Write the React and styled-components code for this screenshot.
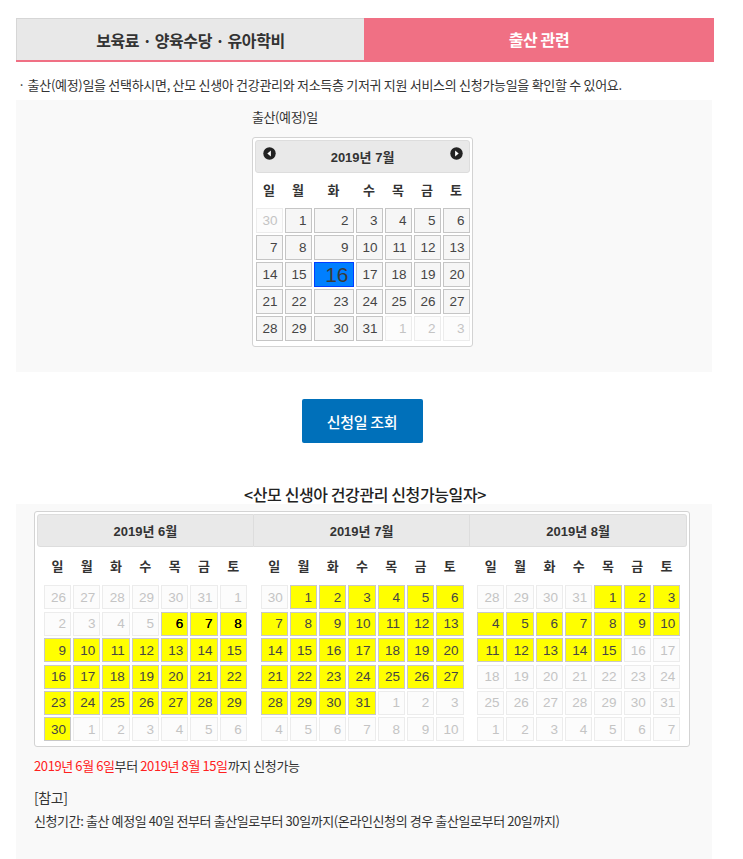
import React from 'react';
import styled, { createGlobalStyle, css } from 'styled-components';

const GlobalStyle = createGlobalStyle`
  body {
    margin: 0;
    background: #ffffff;
    font-family: "Noto Sans CJK KR", "Noto Sans", sans-serif;
    color: #333;
  }
`;

const Page = styled.div`
  width: 698px;
  margin-left: 16px;
  padding-top: 18px;
`;

const Tabs = styled.div`
  display: flex;
  height: 42px;
  border-bottom: 2px solid #f07084;
`;

const Tab = styled.div`
  flex: ${(p) => (p.$active ? '0 0 350px' : '0 0 348px')};
  display: flex;
  align-items: center;
  justify-content: center;
  font-size: 16px;
  font-weight: 700;
  letter-spacing: -0.4px;
  box-sizing: border-box;
  ${(p) =>
    p.$active
      ? css`
          background: #f07084;
          color: #fff;
        `
      : css`
          background: #e8e8e8;
          color: #333;
          border-top: 1px solid #d6d6d6;
          border-left: 1px solid #d6d6d6;
        `}
`;

const Notice = styled.p`
  margin: 14px 0 6px 2px;
  font-size: 13px;
  line-height: 18px;
  letter-spacing: -0.3px;
  color: #333;
`;

const Panel = styled.section`
  width: 696px;
  background: #f9f9f9;
  box-sizing: border-box;
  padding: ${(p) => p.$pad};
`;

const PickerColumn = styled.div`
  width: 221px;
  margin-left: 236px;
`;

const FieldLabel = styled.div`
  font-size: 13px;
  line-height: 18px;
  letter-spacing: -0.4px;
  color: #333;
  margin-bottom: 11px;
`;

const Widget = styled.div`
  background: #fff;
  border: 1px solid #d3d3d3;
  border-radius: 3px;
  padding: 2px 2px ${(p) => p.$bottom}px;
  box-sizing: border-box;
  width: ${(p) => p.$width}px;
  margin-left: ${(p) => p.$left || 0}px;
  display: flex;
`;

const Group = styled.div`
  flex: 1;
  display: flex;
  flex-direction: column;
`;

const Header = styled.div`
  height: 33px;
  box-sizing: border-box;
  background: #e9e9e9;
  border: 1px solid #dddddd;
  border-left-width: ${(p) => (p.$first ? 1 : 0)}px;
  border-radius: ${(p) => p.$radius};
  display: flex;
  align-items: center;
  justify-content: space-between;
  padding: 0 6px;
  font-family: "Liberation Sans", "Noto Sans CJK KR", sans-serif;
  font-weight: 700;
  font-size: 13px;
  color: #333;
`;

const Title = styled.span`
  flex: 1;
  text-align: center;
`;

const NavSlot = styled.span`
  width: 14px;
  height: 14px;
  display: flex;
  align-items: center;
  justify-content: center;
  margin-top: -6px;
`;

const Grid = styled.div`
  display: grid;
  grid-template-columns: ${(p) => p.$cols};
  column-gap: 2px;
  row-gap: ${(p) => p.$rowGap}px;
  width: ${(p) => p.$width}px;
  margin: 0 auto;
`;

const DayName = styled.div`
  height: ${(p) => p.$h}px;
  display: flex;
  align-items: center;
  justify-content: center;
  font-size: 13px;
  font-weight: 700;
  color: #333;
`;

const stateStyles = {
  normal: css`
    background: #f6f6f6;
    border-color: #c5c5c5;
    color: #454545;
  `,
  muted: css`
    background: #fcfcfc;
    border-color: #ececec;
    color: #c4c4c4;
  `,
  active: css`
    background: #007fff;
    border-color: #003eff;
    color: #3a3a3a;
    font-size: 21px;
  `,
  avail: css`
    background: #ffff00;
    border-color: #c8c8c8;
    color: #454545;
  `,
  strong: css`
    background: #ffff00;
    border-color: #c8c8c8;
    color: #000;
    text-shadow: 0 0 0.4px #000;
  `,
};

const Cell = styled.div`
  height: ${(p) => p.$h}px;
  box-sizing: border-box;
  border: 1px solid;
  display: flex;
  align-items: center;
  justify-content: flex-end;
  padding-right: 4px;
  font-family: "Liberation Sans", Arial, sans-serif;
  font-size: 13.5px;
  ${(p) => stateStyles[p.$state]}
`;

const ButtonRow = styled.div`
  display: flex;
  justify-content: center;
  padding: 27px 6px 0 0;
`;

const LookupButton = styled.button`
  width: 121px;
  height: 44px;
  border: none;
  border-radius: 2px;
  background: #0070ba;
  color: #fff;
  font-family: "Noto Sans CJK KR", sans-serif;
  font-size: 15px;
  font-weight: 500;
  letter-spacing: -0.3px;
  cursor: pointer;
`;

const SectionTitle = styled.h2`
  margin: 41px 0 0;
  text-align: center;
  font-size: 16px;
  line-height: 20px;
  font-weight: 500;
  letter-spacing: -0.4px;
  color: #222;
`;

const InfoLine = styled.p`
  margin: ${(p) => p.$margin};
  font-size: ${(p) => p.$size || 13}px;
  line-height: 18px;
  letter-spacing: -0.4px;
  color: #333;
`;

const Red = styled.span`
  color: #ff2020;
`;

const DAY_NAMES = ['일', '월', '화', '수', '목', '금', '토'];

function buildWeeks(year, month, rows) {
  const first = new Date(year, month - 1, 1);
  const start = new Date(year, month - 1, 1 - first.getDay());
  const total = rows || Math.ceil((first.getDay() + new Date(year, month, 0).getDate()) / 7);
  const days = [];
  for (let i = 0; i < total * 7; i++) {
    const d = new Date(start.getFullYear(), start.getMonth(), start.getDate() + i);
    days.push({ date: d, inMonth: d.getMonth() === month - 1 });
  }
  return days;
}

const availFrom = new Date(2019, 5, 6);
const availTo = new Date(2019, 7, 15);

function NavIcon({ dir }) {
  return (
    <svg width="13" height="13" viewBox="0 0 13 13">
      <circle cx="6.5" cy="6.5" r="6.2" fill="#222" />
      {dir === 'prev' ? (
        <path d="M7.9 3.6 L4.3 6.5 L7.9 9.4 Z" fill="#fff" />
      ) : (
        <path d="M5.1 3.6 L8.7 6.5 L5.1 9.4 Z" fill="#fff" />
      )}
    </svg>
  );
}

function SinglePicker() {
  const days = buildWeeks(2019, 7);
  return (
    <Widget $width={221} $bottom={5}>
      <Group>
        <Header $first $radius="3px">
          <NavSlot>
            <NavIcon dir="prev" />
          </NavSlot>
          <Title>2019년 7월</Title>
          <NavSlot>
            <NavIcon dir="next" />
          </NavSlot>
        </Header>
        <Grid $cols="27px 27px 40px 27px 27px 27px 27px" $rowGap={2} $width={214}>
          {DAY_NAMES.map((n) => (
            <DayName key={n} $h={33}>
              {n}
            </DayName>
          ))}
          {days.map(({ date, inMonth }, i) => {
            let state = inMonth ? 'normal' : 'muted';
            if (inMonth && date.getDate() === 16) state = 'active';
            return (
              <Cell key={i} $h={25} $state={state}>
                {date.getDate()}
              </Cell>
            );
          })}
        </Grid>
      </Group>
    </Widget>
  );
}

const MONTHS = [6, 7, 8];

function MultiPicker() {
  return (
    <Widget $width={656} $left={18} $bottom={5}>
      {MONTHS.map((m, gi) => {
        const days = buildWeeks(2019, m, 6);
        const radius = gi === 0 ? '3px 0 0 3px' : gi === 2 ? '0 3px 3px 0' : '0';
        return (
          <Group key={m}>
            <Header $first={gi === 0} $radius={radius}>
              <Title>2019년 {m}월</Title>
            </Header>
            <Grid $cols="repeat(7, 1fr)" $rowGap={2.4} $width={203}>
              {DAY_NAMES.map((n) => (
                <DayName key={n} $h={36}>
                  {n}
                </DayName>
              ))}
              {days.map(({ date, inMonth }, i) => {
                let state = 'muted';
                if (inMonth && date >= availFrom && date <= availTo) {
                  state = m === 6 && date.getDate() <= 8 ? 'strong' : 'avail';
                }
                return (
                  <Cell key={i} $h={24} $state={state}>
                    {date.getDate()}
                  </Cell>
                );
              })}
            </Grid>
          </Group>
        );
      })}
    </Widget>
  );
}

const InfoBlock = styled.div`
  padding-left: 18px;
`;

export default function App() {
  return (
    <>
      <GlobalStyle />
      <Page>
        <Tabs>
          <Tab>보육료 · 양육수당 · 유아학비</Tab>
          <Tab $active>출산 관련</Tab>
        </Tabs>
        <Notice>
          · 출산(예정)일을 선택하시면, 산모 신생아 건강관리와 저소득층 기저귀 지원 서비스의 신청가능일을 확인할 수 있어요.
        </Notice>
        <Panel $pad="8px 0 25px">
          <PickerColumn>
            <FieldLabel>출산(예정)일</FieldLabel>
            <SinglePicker />
          </PickerColumn>
        </Panel>
        <ButtonRow>
          <LookupButton type="button">신청일 조회</LookupButton>
        </ButtonRow>
        <SectionTitle>&lt;산모 신생아 건강관리 신청가능일자&gt;</SectionTitle>
        <Panel $pad="7px 0 30px">
          <MultiPicker />
          <InfoBlock>
            <InfoLine $margin="10px 0 0">
              <Red>2019년 6월 6일</Red>부터 <Red>2019년 8월 15일</Red>까지 신청가능
            </InfoLine>
            <InfoLine $margin="13px 0 0" $size={14}>
              [참고]
            </InfoLine>
            <InfoLine $margin="6px 0 0">
              신청기간: 출산 예정일 40일 전부터 출산일로부터 30일까지(온라인신청의 경우 출산일로부터 20일까지)
            </InfoLine>
          </InfoBlock>
        </Panel>
      </Page>
    </>
  );
}
